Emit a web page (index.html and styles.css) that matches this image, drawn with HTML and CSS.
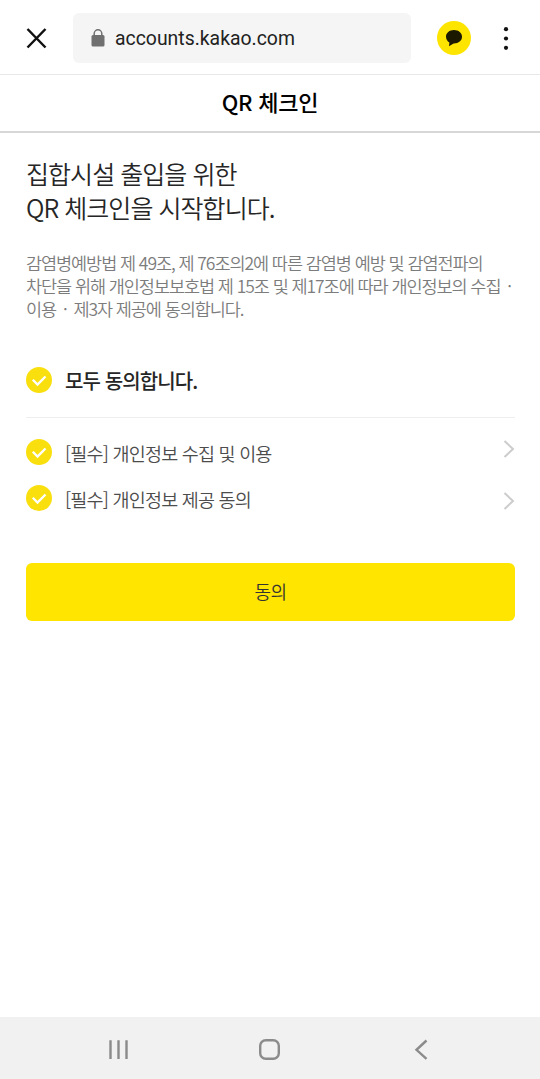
FILE: index.html
```html
<!DOCTYPE html>
<html lang="ko">
<head>
<meta charset="utf-8">
<title>QR 체크인</title>
<link rel="stylesheet" href="styles.css">
</head>
<body>
<div class="screen">
  <header class="browser-bar">
    <svg class="close" width="22" height="22" viewBox="0 0 22 22"><path d="M1.500 2l18 18.500M19.500 2l-18 18.500"/></svg>
    <div class="address">
      <svg class="lock" width="14" height="18" viewBox="0 0 14 18"><rect x="0.500" y="6" width="13" height="11.500" rx="1.500"/><path d="M3.200 7V4.600a3.800 3.800 0 0 1 7.600 0V7"/></svg>
      <span class="url">accounts.kakao.com</span>
    </div>
    <svg class="talk" width="34" height="34" viewBox="0 0 34 34"><circle cx="17" cy="17" r="17"/><path d="M17 9c-4.600 0-8 2.900-8 6.700 0 2.500 1.300 4.500 3.400 5.700L12 25.300l4.600-2.900H17c4.600 0 8-2.900 8-6.700S21.600 9 17 9z"/></svg>
    <svg class="more" width="6" height="24" viewBox="0 0 6 24"><circle cx="3" cy="3.200" r="2.100"/><circle cx="3" cy="12.500" r="2.100"/><circle cx="3" cy="21.800" r="2.100"/></svg>
  </header>
  <div class="title-bar"><h1 class="title">QR 체크인</h1></div>
  <main class="content">
    <h2 class="headline">집합시설 출입을 위한<br>QR 체크인을 시작합니다.</h2>
    <p class="notice">감염병예방법 제 49조, 제 76조의2에 따른 감염병 예방 및 감염전파의<br>차단을 위해 개인정보보호법 제 15조 및 제17조에 따라 개인정보의 수집 <span class="dot">·</span><br>이용 <span class="dot">·</span> 제3자 제공에 동의합니다.</p>
    <div class="agree-all">
      <svg class="check" width="26" height="26" viewBox="0 0 26 26"><circle cx="13" cy="13" r="13"/><path d="M6.800 12.800l4.700 4.700 8-8"/></svg>
      <span class="label-all">모두 동의합니다.</span>
    </div>
    <ul class="terms">
      <li class="term">
        <svg class="check" width="26" height="26" viewBox="0 0 26 26"><circle cx="13" cy="13" r="13"/><path d="M6.800 12.800l4.700 4.700 8-8"/></svg>
        <span class="label">[필수] 개인정보 수집 및 이용</span>
        <svg class="arrow" width="12" height="18" viewBox="0 0 12 18"><path d="M1.500 1l8.500 8-8.500 8"/></svg>
      </li>
      <li class="term term-last">
        <svg class="check" width="26" height="26" viewBox="0 0 26 26"><circle cx="13" cy="13" r="13"/><path d="M6.800 12.800l4.700 4.700 8-8"/></svg>
        <span class="label">[필수] 개인정보 제공 동의</span>
        <svg class="arrow" width="12" height="18" viewBox="0 0 12 18"><path d="M1.500 1l8.500 8-8.500 8"/></svg>
      </li>
    </ul>
    <button class="submit" type="button">동의</button>
  </main>
  <nav class="system-nav">
    <svg width="22" height="22" viewBox="0 0 22 22"><path d="M2.500 1.300v18.700M10.500 1.300v18.700M18.500 1.300v18.700"/></svg>
    <svg width="22" height="22" viewBox="0 0 22 22"><rect x="1.200" y="1.200" width="18.600" height="18.600" rx="5.500"/></svg>
    <svg width="22" height="22" viewBox="0 0 22 22"><path d="M16.500 1.500L6.500 10.800l10 9"/></svg>
  </nav>
</div>
</body>
</html>
```
FILE: styles.css
```css
* { box-sizing: border-box; }
body { margin: 0; background: #fff; font-family: "Noto Sans CJK KR", sans-serif; }
.screen { display: flex; flex-direction: column; width: 540px; height: 1079px; }
.browser-bar { display: flex; align-items: flex-start; height: 75px; padding: 13px 31px 0 26px; border-bottom: 1px solid #e8e8e8; }
.close { margin-top: 14px; fill: none; stroke: #111; stroke-width: 2.5; }
.address { display: flex; align-items: center; width: 338px; height: 50px; margin-left: 25px; padding: 0 18px; border-radius: 6px; background: #f5f5f5; }
.lock { fill: #707070; }
.lock path { fill: none; stroke: #707070; stroke-width: 1.5; }
.url { margin-left: 10px; padding-top: 2px; font: 19.4px/26px Roboto, sans-serif; color: #222; }
.talk { margin: 8px 0 0 26px; fill: #fee500; }
.talk path { fill: #1b1a00; }
.more { margin: 13px 0 0 31.5px; fill: #111; flex: none; }
.title-bar { display: flex; justify-content: center; height: 58px; padding-top: 10px; border-bottom: 2px solid #d7d7d7; }
.title { margin: 0; font-size: 22px; line-height: 32px; font-weight: 500; letter-spacing: -0.2px; color: #000; }
.content { flex: 1; padding: 23px 25px 0 26px; }
.headline { margin: 0; font-size: 25px; line-height: 34px; font-weight: 350; letter-spacing: -0.95px; color: #262626; }
.notice { margin: 27px 0 0; font-size: 17.5px; line-height: 23px; font-weight: 350; letter-spacing: -1.07px; color: #7c7c7c; white-space: nowrap; }
.dot { margin: 0 3px; }
.agree-all { display: flex; align-items: center; height: 98px; padding-top: 23px; border-bottom: 1px solid #eee; }
.check { flex: none; fill: #fadf0f; }
.check path { fill: none; stroke: #fff; stroke-width: 2.3; }
.label-all { margin: 2px 0 0 13px; font-size: 20px; line-height: 28px; font-weight: 500; letter-spacing: -0.9px; color: #262626; }
.terms { margin: 0; padding: 21px 0 0; list-style: none; }
.term { display: flex; align-items: flex-start; height: 46px; }
.label { flex: 1; margin: 1px 0 0 13px; font-size: 18.5px; line-height: 26px; font-weight: 350; letter-spacing: -0.8px; color: #4c4c4c; }
.arrow { margin-top: 1px; fill: none; stroke: #ccc; stroke-width: 2; }
.term-last .arrow { margin-top: 7px; }
.submit { display: block; width: 489px; height: 58px; margin-top: 32px; padding: 0 0 3px; border: 0; border-radius: 6px; background: #ffe500; font: 350 18px "Noto Sans CJK KR", sans-serif; letter-spacing: -0.5px; color: #333; }
.system-nav { display: flex; justify-content: space-between; height: 62px; padding: 22px 108px 0; background: #f1f1f1; fill: none; stroke: #8b8b8b; stroke-width: 2.4; }
```
